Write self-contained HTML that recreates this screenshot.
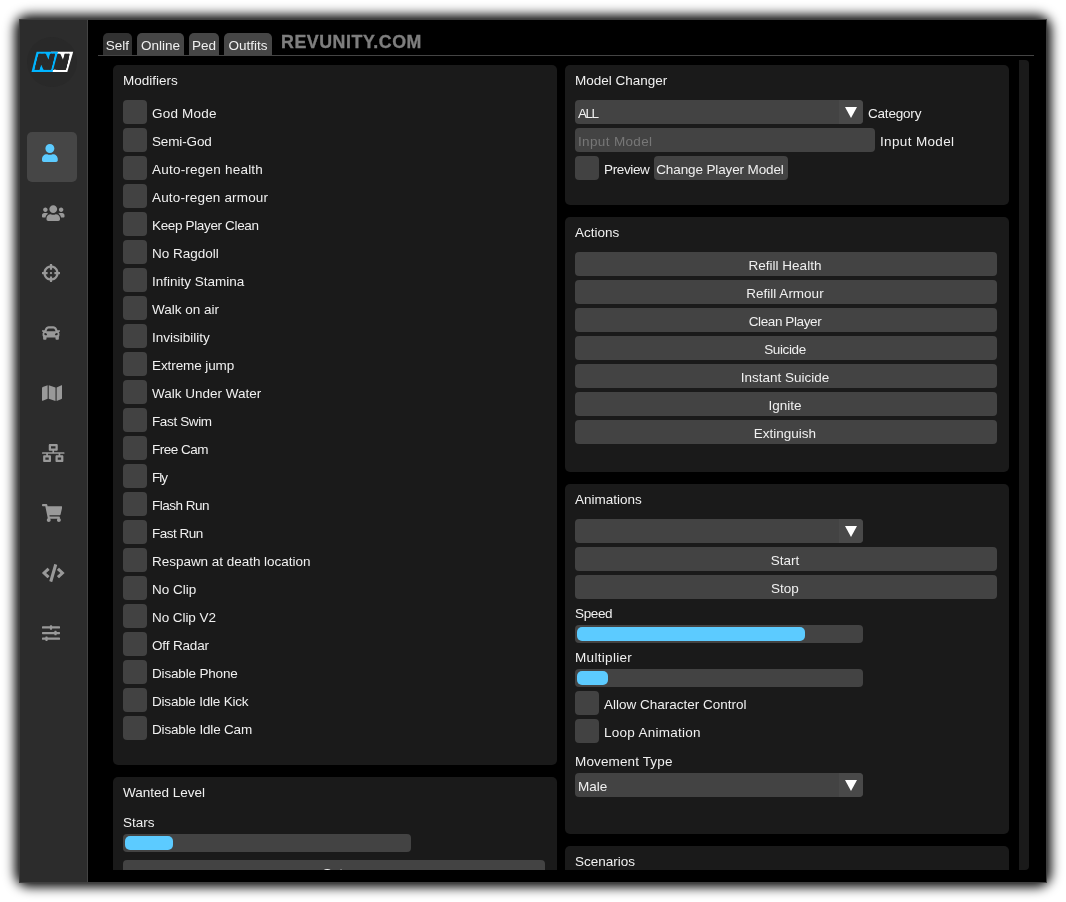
<!DOCTYPE html>
<html lang="en">
<head>
<meta charset="utf-8">
<title>Menu</title>
<style>
html,body{margin:0;padding:0;background:#fff;}
body{width:1066px;height:902px;overflow:hidden;position:relative;font-family:"Liberation Sans",sans-serif;font-size:13.5px;color:#f0f0f0;}
*{box-sizing:border-box;}
div,svg{position:absolute;}
#shd{left:21px;top:21px;width:1024px;height:860px;border-radius:8px;box-shadow:0 0 12px 6px #000;}
#win{left:19px;top:19px;width:1028px;height:864px;background:#000;}
#winb{left:19px;top:19px;width:1028px;height:864px;border:1px solid #3f3f3f;}
#side{left:19px;top:19px;width:69px;height:864px;background:#2c2c2c;border-right:1px solid #434343;}
#logosvg{will-change:transform;}
#logo{left:27px;top:37px;width:50px;height:50px;border-radius:50%;background:#292929;}
.nav{left:27px;width:50px;height:50px;border-radius:5px;}
.nav.on{background:#464646;}
.ic{left:42px;height:18px;fill:#999;}
.ic.on{fill:#5ccbff;}
.tab{top:33px;height:22px;background:#464646;border-radius:5px 5px 0 0;line-height:26px;will-change:transform;text-align:center;white-space:nowrap;}
.tab.on{background:#313131;}
#tabline{left:98px;top:55px;width:936px;height:1px;background:#444;}
#brand{left:281px;top:31px;font-weight:bold;font-size:17.8px;letter-spacing:.55px;color:#7e7e7e;-webkit-text-stroke:.35px #7e7e7e;will-change:transform;white-space:nowrap;line-height:22px;}
#scroll{left:100px;top:60px;width:930px;height:810px;overflow:hidden;will-change:transform;}
#sbar{left:1019px;top:60px;width:10px;height:810px;background:#1a1a1a;border-radius:0 4px 4px 0;}
.panel{background:#1a1a1a;border-radius:5px;}
.t{white-space:nowrap;line-height:18px;height:18px;}
.cb{width:24px;height:24px;background:#424242;border-radius:4px;}
.btn{height:24px;background:#434343;border-radius:4px;text-align:center;line-height:28px;padding-right:2px;white-space:nowrap;}
.combo{height:24px;background:#434343;border-radius:4px;line-height:28px;padding-left:3px;white-space:nowrap;}
.arrb{width:24px;height:24px;background:#494949;border-radius:0 4px 4px 0;}
.arr{width:0;height:0;border-left:6.75px solid transparent;border-right:6.75px solid transparent;border-top:11px solid #fff;}
.inp{height:24px;background:#434343;border-radius:4px;line-height:28px;padding-left:3px;color:#777;white-space:nowrap;}
.sl{height:18px;background:#434343;border-radius:4px;}
.gr{height:14px;background:#5ccbff;border-radius:5px;}
</style>
</head>
<body>
<div id="shd"></div>
<div id="win"></div>
<div id="side"></div>
<div id="logo"></div>
<svg id="logosvg" style="left:27px;top:37px" width="50" height="50" viewBox="0 0 50 50"><defs><clipPath id="lc"><rect x="0" y="16.8" width="50" height="16"/></clipPath></defs><polygon points="24,14.7 46.2,14.7 40.3,35 18,35" fill="#ffffff"/><g clip-path="url(#lc)" font-family="Liberation Sans, sans-serif" font-weight="bold" font-size="20.4" fill="#2a2a2a" stroke="#2a2a2a" stroke-width="1.4"><text transform="translate(22.35,29.4) skewX(-14) scale(1.225,1)">N</text><text transform="translate(21.70,32.0) skewX(-14) scale(1.225,1)">N</text><text transform="translate(21.05,34.6) skewX(-14) scale(1.225,1)">N</text><text transform="translate(20.40,37.2) skewX(-14) scale(1.225,1)">N</text><text transform="translate(19.86,39.4) skewX(-14) scale(1.225,1)">N</text></g><polygon points="9.6,14.7 31,14.7 25.6,35 4.5,35" fill="#00b4ff"/><g clip-path="url(#lc)" font-family="Liberation Sans, sans-serif" font-weight="bold" font-size="20.4" fill="#2a2a2a" stroke="#2a2a2a" stroke-width="1.4"><text transform="translate(7.65,29.4) skewX(-14) scale(1.225,1)">N</text><text transform="translate(7.00,32.0) skewX(-14) scale(1.225,1)">N</text><text transform="translate(6.35,34.6) skewX(-14) scale(1.225,1)">N</text></g></svg>
<div class="nav on" style="top:132px"></div>
<svg class="ic on" style="top:144px;width:15.75px" viewBox="0 0 448 512"><path d="M224 256c70.7 0 128-57.3 128-128S294.7 0 224 0 96 57.3 96 128s57.3 128 128 128zm89.6 32h-16.7c-22.2 10.2-46.9 16-72.9 16s-50.6-5.8-72.9-16h-16.7C60.2 288 0 348.2 0 422.4V464c0 26.5 21.5 48 48 48h352c26.5 0 48-21.5 48-48v-41.6c0-74.200-60.200-134.400-134.400-134.400z"/></svg>
<svg class="ic" style="top:204px;width:22.50px" viewBox="0 0 640 512"><path d="M96 224c35.3 0 64-28.7 64-64s-28.7-64-64-64-64 28.7-64 64 28.7 64 64 64zm448 0c35.3 0 64-28.7 64-64s-28.7-64-64-64-64 28.7-64 64 28.7 64 64 64zm32 32h-64c-17.6 0-33.5 7.1-45.1 18.600 40.300 22.100 68.900 62 75.100 109.400h66c17.700 0 32-14.300 32-32v-32c0-35.300-28.700-64-64-64zm-256 0c61.900 0 112-50.100 112-112S381.900 32 320 32 208 82.100 208 144s50.100 112 112 112zm76.800 32h-8.300c-20.800 10-43.900 16-68.500 16s-47.600-6-68.500-16h-8.300C179.600 288 128 339.600 128 403.200V432c0 26.500 21.500 48 48 48h288c26.500 0 48-21.500 48-48v-28.800c0-63.600-51.600-115.200-115.200-115.200zm-223.700-13.400C161.500 263.100 145.600 256 128 256H64c-35.300 0-64 28.700-64 64v32c0 17.700 14.300 32 32 32h65.900c6.300-47.400 34.900-87.300 75.200-109.400z"/></svg>
<svg class="ic" style="top:264px;width:18.00px" viewBox="0 0 512 512"><path d="M500 224h-30.364C455.724 130.325 381.675 56.276 288 42.364V12c0-6.627-5.373-12-12-12h-40c-6.627 0-12 5.373-12 12v30.364C130.325 56.276 56.276 130.325 42.364 224H12c-6.627 0-12 5.373-12 12v40c0 6.627 5.373 12 12 12h30.364C56.276 381.675 130.325 455.724 224 469.636V500c0 6.627 5.373 12 12 12h40c6.627 0 12-5.373 12-12v-30.364C381.675 455.724 455.724 381.675 469.636 288H500c6.627 0 12-5.373 12-12v-40c0-6.627-5.373-12-12-12zM288 404.634V364c0-6.627-5.373-12-12-12h-40c-6.627 0-12 5.373-12 12v40.634C165.826 392.232 119.783 346.243 107.366 288H148c6.627 0 12-5.373 12-12v-40c0-6.627-5.373-12-12-12h-40.634C119.768 165.826 165.757 119.783 224 107.366V148c0 6.627 5.373 12 12 12h40c6.627 0 12-5.373 12-12v-40.634C346.174 119.768 392.217 165.757 404.634 224H364c-6.627 0-12 5.373-12 12v40c0 6.627 5.373 12 12 12h40.634C392.232 346.174 346.243 392.217 288 404.634zM288 256c0 17.673-14.327 32-32 32s-32-14.327-32-32c0-17.673 14.327-32 32-32s32 14.327 32 32z"/></svg>
<svg class="ic" style="top:324px;width:18.00px" viewBox="0 0 512 512"><path d="M499.99 176h-59.87l-16.64-41.6C406.38 91.63 365.57 64 319.5 64h-127c-46.06 0-86.88 27.63-103.99 70.4L71.87 176H12.01C4.2 176-1.53 183.34.37 190.91l6 24C7.7 220.25 12.5 224 18.01 224h20.07C24.65 235.73 16 252.780 16 272v48c0 16.120 6.160 30.670 16 41.930V416c0 17.670 14.330 32 32 32h32c17.670 0 32-14.330 32-32v-32h256v32c0 17.670 14.330 32 32 32h32c17.670 0 32-14.330 32-32v-54.070c9.840-11.250 16-25.800 16-41.930v-48c0-19.220-8.650-36.270-22.070-48H494c5.510 0 10.310-3.750 11.640-9.090l6-24c1.890-7.570-3.840-14.910-11.650-14.910zm-352.060-17.830c7.290-18.220 24.940-30.170 44.570-30.170h127c19.630 0 37.280 11.950 44.570 30.170L384 208H128l19.930-49.830zM96 319.800c-19.200 0-32-12.760-32-31.900S76.800 256 96 256s48 28.710 48 47.850-28.800 15.950-48 15.950zm320 0c-19.200 0-48 3.190-48-15.950S396.800 256 416 256s32 12.760 32 31.900-12.800 31.900-32 31.900z"/></svg>
<svg class="ic" style="top:384px;width:20.25px" viewBox="0 0 576 512"><path d="M0 117.66v346.32c0 11.320 11.430 19.060 21.940 14.860L160 416V32L20.120 87.950A32.006 32.006 0 0 0 0 117.660zM192 416l192 64V96L192 32v384zM554.060 33.160L416 96v384l139.880-55.950A31.996 31.996 0 0 0 576 394.340V48.020c0-11.320-11.430-19.060-21.940-14.860z"/></svg>
<svg class="ic" style="top:444px;width:22.50px" viewBox="0 0 640 512"><path d="M640 264v-16c0-8.840-7.160-16-16-16H344v-40h72c17.670 0 32-14.330 32-32V32c0-17.670-14.330-32-32-32H224c-17.670 0-32 14.330-32 32v128c0 17.670 14.330 32 32 32h72v40H16c-8.840 0-16 7.160-16 16v16c0 8.840 7.160 16 16 16h104v40H64c-17.670 0-32 14.330-32 32v128c0 17.670 14.330 32 32 32h160c17.670 0 32-14.330 32-32V352c0-17.670-14.330-32-32-32h-56v-40h304v40h-56c-17.670 0-32 14.330-32 32v128c0 17.670 14.330 32 32 32h160c17.670 0 32-14.330 32-32V352c0-17.670-14.330-32-32-32h-56v-40h104c8.840 0 16-7.160 16-16zM256 128V64h128v64H256zm-64 320H96v-64h96v64zm352 0h-96v-64h96v64z"/></svg>
<svg class="ic" style="top:504px;width:20.25px" viewBox="0 0 576 512"><path d="M528.12 301.319l47.273-208C578.806 78.301 567.391 64 551.99 64H159.208l-9.166-44.81C147.758 8.021 137.93 0 126.529 0H24C10.745 0 0 10.745 0 24v16c0 13.255 10.745 24 24 24h69.883l70.248 343.435C147.325 417.1 136 435.222 136 456c0 30.928 25.072 56 56 56s56-25.072 56-56c0-15.674-6.447-29.835-16.824-40h209.647C430.447 426.165 424 440.326 424 456c0 30.928 25.072 56 56 56s56-25.072 56-56c0-22.172-12.888-41.332-31.579-50.405l5.517-24.276c3.413-15.018-8.002-29.319-23.403-29.319H218.117l-6.545-32h293.145c11.206 0 20.92-7.754 23.403-18.681z"/></svg>
<svg class="ic" style="top:564px;width:22.50px" viewBox="0 0 640 512"><path d="M278.9 511.5l-61-17.7c-6.4-1.8-10-8.5-8.2-14.9L346.2 8.7c1.8-6.4 8.5-10 14.9-8.2l61 17.7c6.4 1.8 10 8.5 8.2 14.9L293.8 503.3c-1.9 6.4-8.5 10.1-14.9 8.2zm-114-112.2l43.5-46.4c4.6-4.9 4.3-12.7-.8-17.2L117 256l90.6-79.7c5.1-4.500 5.500-12.300.8-17.200l-43.500-46.400c-4.500-4.800-12.100-5.100-17-.5L3.800 247.200c-5.100 4.700-5.100 12.800 0 17.500l144.100 135.100c4.900 4.600 12.500 4.400 17-.5zm327.200.6l144.100-135.100c5.100-4.700 5.100-12.800 0-17.500L492.100 112.100c-4.800-4.500-12.400-4.300-17 .5L431.600 159c-4.600 4.900-4.300 12.700.8 17.200L523 256l-90.600 79.700c-5.100 4.500-5.500 12.300-.8 17.200l43.500 46.400c4.500 4.900 12.100 5.100 17 .6z"/></svg>
<svg class="ic" style="top:624px;width:18.00px" viewBox="0 0 512 512"><path d="M496 384H160v-16c0-8.800-7.200-16-16-16h-32c-8.800 0-16 7.200-16 16v16H16c-8.800 0-16 7.200-16 16v32c0 8.800 7.200 16 16 16h80v16c0 8.800 7.200 16 16 16h32c8.800 0 16-7.200 16-16v-16h336c8.800 0 16-7.200 16-16v-32c0-8.800-7.200-16-16-16zm0-160h-80v-16c0-8.800-7.200-16-16-16h-32c-8.800 0-16 7.200-16 16v16H16c-8.800 0-16 7.200-16 16v32c0 8.800 7.200 16 16 16h336v16c0 8.800 7.200 16 16 16h32c8.800 0 16-7.200 16-16v-16h80c8.800 0 16-7.200 16-16v-32c0-8.800-7.200-16-16-16zm0-160H288V48c0-8.800-7.200-16-16-16h-32c-8.800 0-16 7.200-16 16v16H16C7.200 64 0 71.200 0 80v32c0 8.800 7.200 16 16 16h208v16c0 8.800 7.200 16 16 16h32c8.800 0 16-7.200 16-16v-16h208c8.800 0 16-7.200 16-16V80c0-8.800-7.200-16-16-16z"/></svg>
<div class="tab on" style="left:103px;width:29px">Self</div>
<div class="tab" style="left:137px;width:47px">Online</div>
<div class="tab" style="left:189px;width:30px">Ped</div>
<div class="tab" style="left:224px;width:48px">Outfits</div>
<div id="brand">REVUNITY.COM</div>
<div id="tabline"></div>
<div id="scroll">
<div class="panel" style="left:13px;top:5px;width:444px;height:700px"></div>
<div class="t" style="left:23px;top:12px;">Modifiers</div>
<div class="cb" style="left:23px;top:40px"></div>
<div class="t" style="left:52px;top:45px;letter-spacing:0.214px;">God Mode</div>
<div class="cb" style="left:23px;top:68px"></div>
<div class="t" style="left:52px;top:73px;letter-spacing:-0.143px;">Semi-God</div>
<div class="cb" style="left:23px;top:96px"></div>
<div class="t" style="left:52px;top:101px;letter-spacing:0.219px;">Auto-regen health</div>
<div class="cb" style="left:23px;top:124px"></div>
<div class="t" style="left:52px;top:129px;letter-spacing:0.169px;">Auto-regen armour</div>
<div class="cb" style="left:23px;top:152px"></div>
<div class="t" style="left:52px;top:157px;letter-spacing:-0.350px;">Keep Player Clean</div>
<div class="cb" style="left:23px;top:180px"></div>
<div class="t" style="left:52px;top:185px;">No Ragdoll</div>
<div class="cb" style="left:23px;top:208px"></div>
<div class="t" style="left:52px;top:213px;">Infinity Stamina</div>
<div class="cb" style="left:23px;top:236px"></div>
<div class="t" style="left:52px;top:241px;">Walk on air</div>
<div class="cb" style="left:23px;top:264px"></div>
<div class="t" style="left:52px;top:269px;">Invisibility</div>
<div class="cb" style="left:23px;top:292px"></div>
<div class="t" style="left:52px;top:297px;letter-spacing:-0.091px;">Extreme jump</div>
<div class="cb" style="left:23px;top:320px"></div>
<div class="t" style="left:52px;top:325px;">Walk Under Water</div>
<div class="cb" style="left:23px;top:348px"></div>
<div class="t" style="left:52px;top:353px;letter-spacing:-0.375px;">Fast Swim</div>
<div class="cb" style="left:23px;top:376px"></div>
<div class="t" style="left:52px;top:381px;letter-spacing:-0.514px;">Free Cam</div>
<div class="cb" style="left:23px;top:404px"></div>
<div class="t" style="left:52px;top:409px;letter-spacing:-1.000px;">Fly</div>
<div class="cb" style="left:23px;top:432px"></div>
<div class="t" style="left:52px;top:437px;letter-spacing:-0.500px;">Flash Run</div>
<div class="cb" style="left:23px;top:460px"></div>
<div class="t" style="left:52px;top:465px;letter-spacing:-0.514px;">Fast Run</div>
<div class="cb" style="left:23px;top:488px"></div>
<div class="t" style="left:52px;top:493px;letter-spacing:-0.029px;">Respawn at death location</div>
<div class="cb" style="left:23px;top:516px"></div>
<div class="t" style="left:52px;top:521px;">No Clip</div>
<div class="cb" style="left:23px;top:544px"></div>
<div class="t" style="left:52px;top:549px;letter-spacing:-0.067px;">No Clip V2</div>
<div class="cb" style="left:23px;top:572px"></div>
<div class="t" style="left:52px;top:577px;letter-spacing:-0.150px;">Off Radar</div>
<div class="cb" style="left:23px;top:600px"></div>
<div class="t" style="left:52px;top:605px;letter-spacing:-0.167px;">Disable Phone</div>
<div class="cb" style="left:23px;top:628px"></div>
<div class="t" style="left:52px;top:633px;letter-spacing:-0.200px;">Disable Idle Kick</div>
<div class="cb" style="left:23px;top:656px"></div>
<div class="t" style="left:52px;top:661px;letter-spacing:-0.173px;">Disable Idle Cam</div>
<div class="panel" style="left:13px;top:717px;width:444px;height:223px"></div>
<div class="t" style="left:23px;top:724px;">Wanted Level</div>
<div class="t" style="left:23px;top:754px;">Stars</div>
<div class="sl" style="left:23px;top:774px;width:288px"></div>
<div class="gr" style="left:25px;top:776px;width:48px"></div>
<div class="btn" style="left:23px;top:800px;width:422px;">Set</div>
<div class="panel" style="left:465px;top:5px;width:444px;height:140px"></div>
<div class="t" style="left:475px;top:12px;">Model Changer</div>
<div class="combo" style="left:475px;top:40px;width:288px;letter-spacing:-1.500px;">ALL</div>
<div class="arrb" style="left:739px;top:40px"></div>
<div class="arr" style="left:744.8px;top:46.599999999999994px"></div>
<div class="t" style="left:768px;top:45px;letter-spacing:-0.200px;">Category</div>
<div class="inp" style="left:475px;top:68px;width:300px;letter-spacing:0.350px;">Input Model</div>
<div class="t" style="left:780px;top:73px;letter-spacing:0.350px;">Input Model</div>
<div class="cb" style="left:475px;top:96px"></div>
<div class="t" style="left:504px;top:101px;letter-spacing:-0.367px;">Preview</div>
<div class="btn" style="left:554px;top:96px;width:134px;letter-spacing:-0.122px;">Change Player Model</div>
<div class="panel" style="left:465px;top:157px;width:444px;height:255px"></div>
<div class="t" style="left:475px;top:164px;">Actions</div>
<div class="btn" style="left:475px;top:192px;width:422px;">Refill Health</div>
<div class="btn" style="left:475px;top:220px;width:422px;">Refill Armour</div>
<div class="btn" style="left:475px;top:248px;width:422px;letter-spacing:-0.400px;">Clean Player</div>
<div class="btn" style="left:475px;top:276px;width:422px;letter-spacing:-0.367px;">Suicide</div>
<div class="btn" style="left:475px;top:304px;width:422px;">Instant Suicide</div>
<div class="btn" style="left:475px;top:332px;width:422px;">Ignite</div>
<div class="btn" style="left:475px;top:360px;width:422px;">Extinguish</div>
<div class="panel" style="left:465px;top:424px;width:444px;height:350px"></div>
<div class="t" style="left:475px;top:431px;">Animations</div>
<div class="combo" style="left:475px;top:459px;width:288px;"></div>
<div class="arrb" style="left:739px;top:459px"></div>
<div class="arr" style="left:744.8px;top:465.6px"></div>
<div class="btn" style="left:475px;top:487px;width:422px;">Start</div>
<div class="btn" style="left:475px;top:515px;width:422px;">Stop</div>
<div class="t" style="left:475px;top:545px;letter-spacing:-0.375px;">Speed</div>
<div class="sl" style="left:475px;top:565px;width:288px"></div>
<div class="gr" style="left:477px;top:567px;width:228px"></div>
<div class="t" style="left:475px;top:589px;letter-spacing:0.311px;">Multiplier</div>
<div class="sl" style="left:475px;top:609px;width:288px"></div>
<div class="gr" style="left:477px;top:611px;width:31px"></div>
<div class="cb" style="left:475px;top:631px"></div>
<div class="t" style="left:504px;top:636px;">Allow Character Control</div>
<div class="cb" style="left:475px;top:659px"></div>
<div class="t" style="left:504px;top:664px;letter-spacing:0.269px;">Loop Animation</div>
<div class="t" style="left:475px;top:693px;letter-spacing:0.133px;">Movement Type</div>
<div class="combo" style="left:475px;top:713px;width:288px;">Male</div>
<div class="arrb" style="left:739px;top:713px"></div>
<div class="arr" style="left:744.8px;top:719.6px"></div>
<div class="panel" style="left:465px;top:786px;width:444px;height:154px"></div>
<div class="t" style="left:475px;top:793px;">Scenarios</div>
</div>
<div id="sbar"></div>
<div id="winb"></div>
</body>
</html>
